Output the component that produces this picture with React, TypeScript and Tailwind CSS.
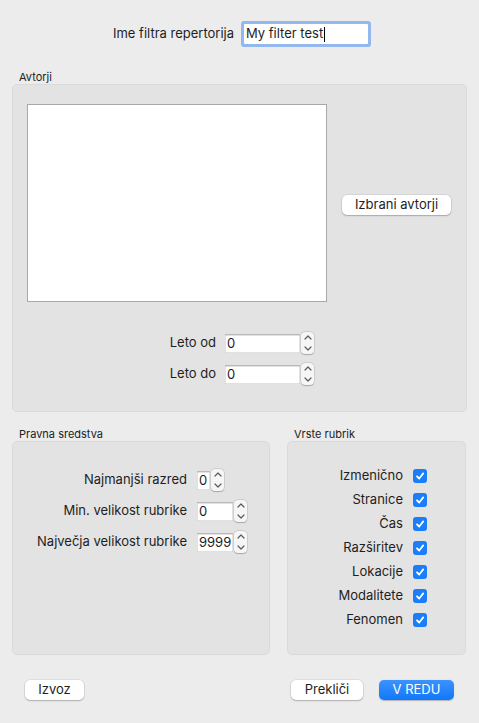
import React from 'react';

const Stepper = () => (
  <div className="ml-[1px] flex h-[22px] w-[13px] flex-col items-center justify-between rounded-[4px] bg-[#f6f6f6] py-[3px] shadow-[0_0_0_0.5px_rgba(0,0,0,0.15),0_0.5px_1px_rgba(0,0,0,0.2)]">
    <svg width="8" height="5" viewBox="0 0 8 5">
      <path d="M1 4 L4 1 L7 4" fill="none" stroke="#5a5a5a" strokeWidth="1.2" strokeLinecap="round" strokeLinejoin="round" />
    </svg>
    <svg width="8" height="5" viewBox="0 0 8 5">
      <path d="M1 1 L4 4 L7 1" fill="none" stroke="#5a5a5a" strokeWidth="1.2" strokeLinecap="round" strokeLinejoin="round" />
    </svg>
  </div>
);

const NumField = ({ value, width }: { value: string; width: string }) => (
  <div className="flex items-center">
    <div className={`${width} flex h-[19px] items-center bg-white pl-[2px] text-[13px] leading-none shadow-[inset_0_0_0_0.5px_#c4c4c4] border-t border-[#b9b9b9]`}>
      {value}
    </div>
    <Stepper />
  </div>
);

const Button = ({ children, className = '' }: { children: React.ReactNode; className?: string }) => (
  <button className={`flex h-[20px] items-center justify-center rounded-[5px] bg-white text-[13px] text-[#1e1e1e] shadow-[0_0_0_0.5px_rgba(0,0,0,0.12),0_1px_1.5px_rgba(0,0,0,0.22)] ${className}`}>
    {children}
  </button>
);

const Check = () => (
  <div className="flex h-[14px] w-[14px] items-center justify-center rounded-[3px] bg-[#1b7ffb]">
    <svg width="10" height="10" viewBox="0 0 10 10">
      <path d="M2 5.3 L4.2 7.5 L8.2 2.4" fill="none" stroke="white" strokeWidth="1.8" strokeLinecap="round" strokeLinejoin="round" />
    </svg>
  </div>
);

const GroupLabel = ({ children }: { children: React.ReactNode }) => (
  <div className="h-[13px] pl-[7px] text-[11px] leading-[13px] text-[#222]">{children}</div>
);

const Box = ({ children, className = '' }: { children: React.ReactNode; className?: string }) => (
  <div className={`rounded-[5px] border border-[#dadada] bg-[#e3e3e3] ${className}`}>{children}</div>
);

export default function App() {
  const kinds = ['Izmenično', 'Stranice', 'Čas', 'Razširitev', 'Lokacije', 'Modalitete', 'Fenomen'];

  return (
    <div className="flex h-[723px] w-[479px] flex-col bg-[#ececec] text-[#1e1e1e]" style={{ fontFamily: 'Inter, "Noto Sans", sans-serif' }}>
      {/* name row */}
      <div className="flex items-center pt-[24px]">
        <span className="w-[234px] whitespace-nowrap text-right text-[13px]">Ime filtra repertorija</span>
        <div className="ml-[10px] flex h-[20px] w-[124px] items-center rounded-[1px] bg-white pl-[2px] text-[13px] ring-[3px] ring-[#93b8ee]">
          My filter test<span className="ml-[1px] inline-block h-[15px] w-[1px] bg-black" />
        </div>
      </div>

      {/* Avtorji */}
      <div className="mx-[12px] mt-[27px]">
        <GroupLabel>Avtorji</GroupLabel>
        <Box className="h-[328px] pl-[14px] pt-[19px]">
          <div className="flex items-center">
            <div className="h-[198px] w-[300px] border border-[#a8a8a8] bg-white" />
            <Button className="ml-[15px] mt-[3px] w-[109px]">Izbrani avtorji</Button>
          </div>
          <div className="ml-[123px] mt-[30px] flex flex-col gap-[9px]">
            <div className="flex items-center">
              <span className="w-[66px] text-right text-[13px]">Leto od</span>
              <div className="ml-[9px]"><NumField value="0" width="w-[75px]" /></div>
            </div>
            <div className="flex items-center">
              <span className="w-[66px] text-right text-[13px]">Leto do</span>
              <div className="ml-[9px]"><NumField value="0" width="w-[75px]" /></div>
            </div>
          </div>
        </Box>
      </div>

      {/* lower groups */}
      <div className="mx-[12px] mt-[16px] flex gap-[17px]">
        <div className="w-[258px]">
          <GroupLabel>Pravna sredstva</GroupLabel>
          <Box className="flex h-[214px] flex-col gap-[11px] pl-[24px] pt-[28px]">
            <div className="flex h-[20px] items-center">
              <span className="w-[150px] text-right text-[13px]">Najmanjši razred</span>
              <div className="ml-[10px]"><NumField value="0" width="w-[13px]" /></div>
            </div>
            <div className="flex h-[20px] items-center">
              <span className="w-[150px] text-right text-[13px]">Min. velikost rubrike</span>
              <div className="ml-[10px]"><NumField value="0" width="w-[36px]" /></div>
            </div>
            <div className="flex h-[20px] items-center">
              <span className="w-[150px] text-right text-[13px]">Največja velikost rubrike</span>
              <div className="ml-[10px]"><NumField value="9999" width="w-[36px]" /></div>
            </div>
          </Box>
        </div>
        <div className="w-[179px]">
          <GroupLabel>Vrste rubrik</GroupLabel>
          <Box className="flex h-[214px] flex-col items-end pr-[38px] pt-[22px]">
            {kinds.map((k) => (
              <div key={k} className="flex h-[24px] items-center gap-[10px]">
                <span className="text-[13px]">{k}</span>
                <Check />
              </div>
            ))}
          </Box>
        </div>
      </div>

      {/* footer */}
      <div className="mt-[25px] flex items-center px-[25px]">
        <Button className="w-[59px]">Izvoz</Button>
        <div className="flex-1" />
        <Button className="w-[72px]">Prekliči</Button>
        <button className="ml-[16px] flex h-[20px] w-[75px] items-center justify-center rounded-[5px] bg-gradient-to-b from-[#3a92fd] to-[#0b78fa] text-[13px] text-white shadow-[0_0.5px_1px_rgba(0,0,0,0.25)]">
          V REDU
        </button>
      </div>
    </div>
  );
}
